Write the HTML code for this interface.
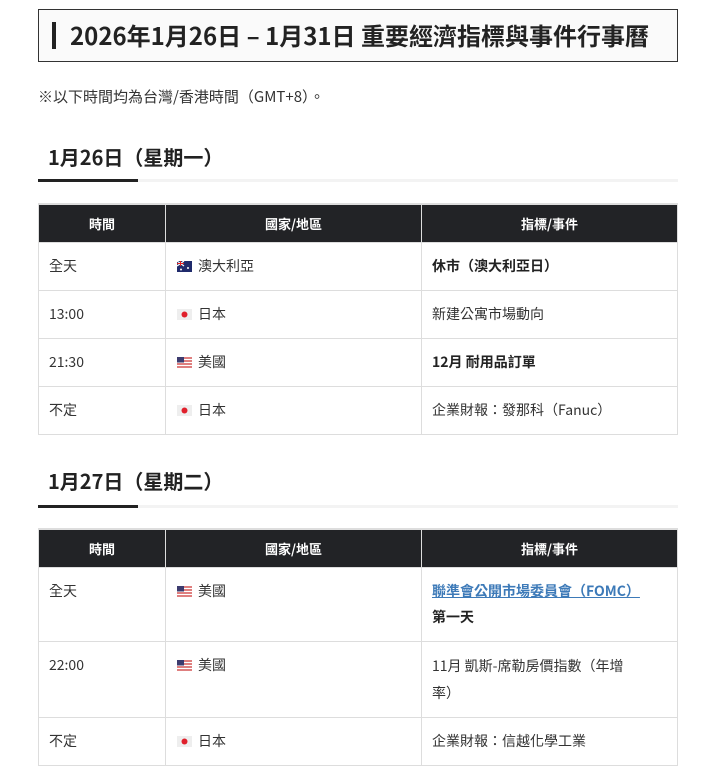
<!DOCTYPE html>
<html><head><meta charset="utf-8"><style>
body{margin:0;background:#fff;font-family:"Noto Sans CJK TC","Liberation Sans",sans-serif;color:#333;}
.wrap{position:absolute;left:38px;width:640px;top:9px}
.title{box-sizing:border-box;height:53px;border:1.5px solid #333;background:#fafafa;position:relative}
.title .bar{position:absolute;left:13px;top:12px;width:4px;height:27px;background:#222}
.title h1{margin:0;position:absolute;left:31px;top:9px;font-size:24px;font-weight:bold;color:#222;line-height:32px;white-space:nowrap}
.note{font-size:15px;margin:24px 0 0;line-height:22px;color:#333}
h2{font-size:20px;font-weight:bold;margin:0;padding-left:10px;line-height:26px;color:#222}
.ul{height:3px;background:#f3f3f3;position:relative;margin-top:10px}
.ul i{position:absolute;left:0;top:0;width:100px;height:3px;background:#222}
table{border-collapse:collapse;width:640px;margin-top:21px;font-size:14px}
th{background:#222326;color:#fff;font-weight:bold;font-size:13px;height:37px;line-height:20px;padding:0;border:1px solid #ddd;border-top:2px solid #ddd}
td{border:1px solid #ddd;padding:11px 10px;line-height:25px;height:25px;vertical-align:top;color:#333}
td b{color:#222}
.f{display:inline-block;vertical-align:-1px;margin-right:6px;margin-left:1px}
a{color:#3d7ab8;font-weight:bold;text-decoration:underline}
</style></head><body>
<div class="wrap">
<div class="title"><div class="bar"></div><h1>2026年1月26日 – 1月31日 重要經濟指標與事件行事曆</h1></div>
<p class="note" style="margin-top:24px">※以下時間均為台灣/香港時間（GMT+8）。</p>
<h2 style="margin-top:36px">1月26日（星期一）</h2>
<div class="ul" style="margin-top:9px"><i></i></div>
<table>
<colgroup><col style="width:127px"><col style="width:256px"><col></colgroup>
<tr><th>時間</th><th>國家/地區</th><th>指標/事件</th></tr>
<tr><td>全天</td><td><svg class="f" width="15" height="11"><rect width="15" height="11" fill="#1f2a6b"/><path d="M0 0L7 5M7 0L0 5" stroke="#fff" stroke-width="1.2"/><path d="M3.5 0v5M0 2.5h7" stroke="#d22" stroke-width="1"/><circle cx="11" cy="7" r="1" fill="#fff"/><circle cx="4" cy="8.5" r="1" fill="#fff"/></svg>澳大利亞</td><td><b>休市（澳大利亞日）</b></td></tr>
<tr><td>13:00</td><td><svg class="f" width="15" height="11"><rect width="15" height="11" fill="#eee"/><circle cx="7.5" cy="5.5" r="3" fill="#e0202c"/></svg>日本</td><td>新建公寓市場動向</td></tr>
<tr><td>21:30</td><td><svg class="f" width="15" height="11"><rect width="15" height="11" fill="#fff"/><path d="M0 1h15M0 4h15M0 7h15M0 10h15" stroke="#c33" stroke-width="1.3"/><rect width="7" height="5.5" fill="#3c3b6e"/></svg>美國</td><td><b>12月 耐用品訂單</b></td></tr>
<tr><td>不定</td><td><svg class="f" width="15" height="11"><rect width="15" height="11" fill="#eee"/><circle cx="7.5" cy="5.5" r="3" fill="#e0202c"/></svg>日本</td><td>企業財報：發那科（Fanuc）</td></tr>
</table>
<h2 style="margin-top:33px">1月27日（星期二）</h2>
<div class="ul" style="margin-top:11px"><i></i></div>
<table style="margin-top:20px">
<colgroup><col style="width:127px"><col style="width:256px"><col></colgroup>
<tr><th>時間</th><th>國家/地區</th><th>指標/事件</th></tr>
<tr><td>全天</td><td><svg class="f" width="15" height="11"><rect width="15" height="11" fill="#fff"/><path d="M0 1h15M0 4h15M0 7h15M0 10h15" stroke="#c33" stroke-width="1.3"/><rect width="7" height="5.5" fill="#3c3b6e"/></svg>美國</td><td style="line-height:25.5px"><a>聯準會公開市場委員會（FOMC）</a><br><b>第一天</b></td></tr>
<tr><td>22:00</td><td><svg class="f" width="15" height="11"><rect width="15" height="11" fill="#fff"/><path d="M0 1h15M0 4h15M0 7h15M0 10h15" stroke="#c33" stroke-width="1.3"/><rect width="7" height="5.5" fill="#3c3b6e"/></svg>美國</td><td style="line-height:26.5px">11月 凱斯-席勒房價指數（年增<br>率）</td></tr>
<tr><td>不定</td><td><svg class="f" width="15" height="11"><rect width="15" height="11" fill="#eee"/><circle cx="7.5" cy="5.5" r="3" fill="#e0202c"/></svg>日本</td><td>企業財報：信越化學工業</td></tr>
</table>
</div>
</body></html>
